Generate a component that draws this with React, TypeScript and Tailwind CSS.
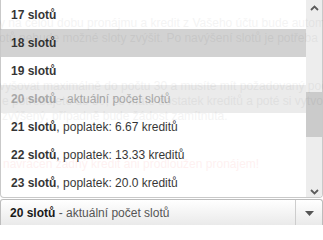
import React from "react";

interface SlotOption {
  slots: number;
  note?: string;
  current?: boolean;
  hover?: boolean;
}

const options: SlotOption[] = [
  { slots: 17 },
  { slots: 18, hover: true },
  { slots: 19 },
  { slots: 20, note: " - aktuální počet slotů", current: true },
  { slots: 21, note: ", poplatek: 6.67 kreditů" },
  { slots: 22, note: ", poplatek: 13.33 kreditů" },
  { slots: 23, note: ", poplatek: 20.0 kreditů" },
];

const Chevron = ({ up }: { up?: boolean }) => (
  <svg width="9" height="6" viewBox="0 0 9 6" className="block">
    <polyline
      points={up ? "1,5 4.5,1.5 8,5" : "1,1 4.5,4.5 8,1"}
      fill="none"
      stroke="#4a4a4a"
      strokeWidth="1.8"
    />
  </svg>
);

function SlotList() {
  return (
    <div className="absolute left-0 top-0 flex h-[198px] w-[323px] overflow-hidden rounded-b-[4px] border-x border-b border-[#c4c4c4] bg-white opacity-90">
      <div className="flex-1 pt-px">
        {options.map((o) => (
          <div
            key={o.slots}
            className={`flex h-[28px] items-center whitespace-nowrap px-[10px] ${
              o.hover ? "bg-[#cecece]" : o.current ? "bg-[#e9e9e9]" : ""
            } ${o.current ? "text-[#a0a0a0]" : "text-[#1e1e1e]"}`}
          >
            <span>
              <b>{o.slots} slotů</b>
              {o.note}
            </span>
          </div>
        ))}
      </div>
      <div className="flex w-[16px] flex-col bg-[#ececec]">
        <div className="flex h-[16px] items-center justify-center">
          <Chevron up />
        </div>
        <div className="flex-1">
          <div className="mt-[76px] h-[45px] bg-[#c6c6c6]" />
        </div>
        <div className="flex h-[16px] items-center justify-center pt-[5px]">
          <Chevron />
        </div>
      </div>
    </div>
  );
}

export default function App() {
  return (
    <div className="relative flex h-[225px] w-[323px] flex-col overflow-hidden bg-white font-['Liberation_Sans',Arial,sans-serif] text-[12px]">
      <div className="h-[199px] shrink-0 overflow-hidden whitespace-nowrap leading-[15px] text-[#8a8a8a]">
        <p className="ml-[-1px] mt-[16px]">
          y na celou dobu pronájmu a kredit z Vašeho účtu bude automaticky
        </p>
        <p className="ml-[-1px]">
          otů nebude možné sloty zvýšit. Po navýšení slotů je potřeba
        </p>
        <p className="ml-[-1px] mt-[33px]">
          vyšovat maximálně do počtu 30 a musíte mít požadovaný počet
        </p>
        <p className="ml-[2px]">
          e potřebujete do 30, že máte dostatek kreditů a poté si vytvořte tiket
        </p>
        <p className="ml-[2px]">zvýšený, případně bude žádost zamítnuta.</p>
        <p className="ml-[3px] mt-[33px] text-[#f56a6a]">
          navrácen žádný kredit ani prodloužen pronájem!
        </p>
      </div>

      <div className="flex h-[27px] shrink-0 rounded-t-[3px] border border-b-0 border-[#bdbdbd] bg-linear-to-b from-white to-[#e9e9e9]">
        <div className="flex flex-1 items-center whitespace-nowrap px-[9px]">
          <span>
            <b className="text-[#1a1a1a]">20 slotů</b>
            <span className="text-[#555]"> - aktuální počet slotů</span>
          </span>
        </div>
        <div className="flex w-[27px] items-center justify-center border-l border-[#cdcdcd]">
          <svg width="9" height="5" viewBox="0 0 9 5" className="block">
            <polygon points="0,0 9,0 4.5,5" fill="#555" />
          </svg>
        </div>
      </div>

      <SlotList />
    </div>
  );
}
